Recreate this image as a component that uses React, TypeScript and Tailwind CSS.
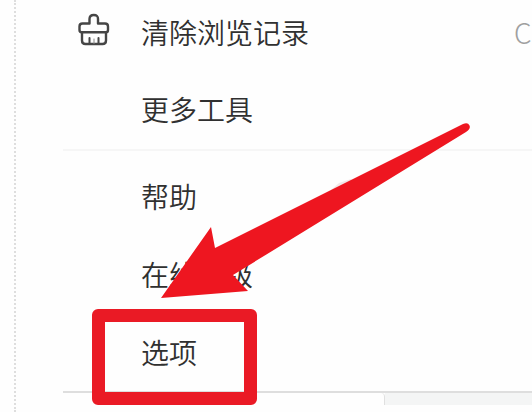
import React from 'react';

type Item = { label: string; shortcut?: string; icon?: boolean; marked?: boolean };

const mainItems: Item[] = [
    { label: '清除浏览记录', shortcut: 'C', icon: true },
    { label: '更多工具' },
];

const moreItems: Item[] = [{ label: '帮助' }, { label: '在线升级' }, { label: '选项', marked: true }];

function BrushIcon() {
    return (
        <svg
            width="34"
            height="34"
            viewBox="0 0 34 34"
            fill="none"
            stroke="#454545"
            strokeWidth="2.4"
            strokeLinejoin="round"
            strokeLinecap="round"
            aria-hidden="true"
        >
            <path d="M12.500 10.500V6Q12.500 2 16.800 2T21 6V10.500H28Q31 10.500 31 13.500V17Q31 19.300 29 19.300H4.500Q2.500 19.300 2.500 17V13.500Q2.500 10.500 5.500 10.500Z" />
            <path d="M5 20V27.500Q5 31 8.500 31H25.500Q29 31 29 27.500V20" />
            <path d="M12.500 25V30.500M21.500 25V30.500" strokeWidth="2" />
            <path d="M17 26V30.500" stroke="#8a8a8a" strokeWidth="1" />
        </svg>
    );
}

function MenuRow({ item }: { item: Item }) {
    return (
        <li className="relative">
            <button
                type="button"
                className="flex h-16 w-full items-center overflow-hidden text-left text-[28px] leading-[40px] font-[350] whitespace-nowrap text-[#303030]"
            >
                <span className="flex w-[78px] shrink-0 pb-1 pl-[14px]">{item.icon && <BrushIcon />}</span>
                <span className="flex-1">{item.label}</span>
                {item.shortcut && (
                    <span className="w-[18px] shrink-0 font-light text-[#a0a0a0]">{item.shortcut}</span>
                )}
            </button>
            {item.marked && (
                <span className="pointer-events-none absolute -top-[11px] left-[29px] h-[96px] w-[165px] rounded-md border-[13px] border-[#ea1a25]" />
            )}
        </li>
    );
}

function Arrow() {
    return (
        <svg
            className="pointer-events-none absolute top-[120px] left-[96px]"
            width="314"
            height="182"
            viewBox="0 0 314 182"
            aria-hidden="true"
        >
            <path d="M172 70L180 63L192 59L196 64L174 74Z" fill="#f0e8e8" />
            <path
                d="M2 178L52 107L56 128L304 4Q309 2 310.500 5.500Q312 9 307 12L74 155L89 171Z"
                fill="#ee1620"
            />
        </svg>
    );
}

export default function App() {
    return (
        <div className="flex min-h-screen bg-[#fefefe] font-['Noto_Sans_CJK_SC',sans-serif]">
            <div className="w-4 shrink-0 border-r-2 border-dotted border-[#dedede]" />
            <main className="relative ml-[47px] min-w-0 flex-1">
                <ul className="flex flex-col gap-[13px]">
                    {mainItems.map((item) => (
                        <MenuRow key={item.label} item={item} />
                    ))}
                </ul>
                <hr className="mt-2 border-t-2 border-[#f6f6f6]" />
                <ul className="flex flex-col gap-[14px] pt-[13px]">
                    {moreItems.map((item) => (
                        <MenuRow key={item.label} item={item} />
                    ))}
                </ul>
                <div className="mt-[7px] flex h-[14px] border-t-2 border-[#dedede]">
                    <div className="w-[322px] rounded-tr-sm border-r border-[#e0e0e0]" />
                    <div className="flex-1 bg-[#f4f5f5]" />
                </div>
                <Arrow />
            </main>
        </div>
    );
}
